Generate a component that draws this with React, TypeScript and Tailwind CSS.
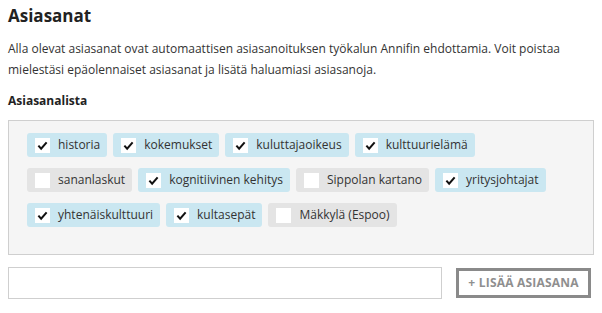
import React from "react";

const tags: { label: string; checked: boolean }[] = [
  { label: "historia", checked: true },
  { label: "kokemukset", checked: true },
  { label: "kuluttajaoikeus", checked: true },
  { label: "kulttuurielämä", checked: true },
  { label: "sananlaskut", checked: false },
  { label: "kognitiivinen kehitys", checked: true },
  { label: "Sippolan kartano", checked: false },
  { label: "yritysjohtajat", checked: true },
  { label: "yhtenäiskulttuuri", checked: true },
  { label: "kultasepät", checked: true },
  { label: "Mäkkylä (Espoo)", checked: false },
];

function Check() {
  return (
    <svg width="11" height="11" viewBox="0 0 12 12" fill="none">
      <path d="M1.5 6.2 L4.5 9.5 L10.5 2.5" stroke="#111" strokeWidth="2.2" />
    </svg>
  );
}

export default function App() {
  return (
    <div className="w-[602px] h-[313px] bg-white px-2 pt-[3px] text-[#333] font-['Open_Sans',sans-serif]">
      <h2 className="text-[17px] font-bold leading-[26px] text-[#222]">Asiasanat</h2>
      <p className="mt-[9px] text-[12px] leading-[21px]">
        Alla olevat asiasanat ovat automaattisen asiasanoituksen työkalun Annifin ehdottamia. Voit poistaa mielestäsi epäolennaiset asiasanat ja lisätä haluamiasi asiasanoja.
      </p>
      <div className="mt-[11px] text-[12px] font-bold leading-[20px] text-[#222]">Asiasanalista</div>
      <div className="mt-[9px] h-[135px] border border-[#cfcfcf] bg-[#f5f5f5] pl-[18px] pr-4 pt-[12px]">
        <div className="flex flex-wrap gap-x-[6px] gap-y-[11px]">
          {tags.map((t) => (
            <div
              key={t.label}
              className={
                "flex h-[24px] items-center gap-[8px] rounded-[3px] pl-[8px] pr-[7px] text-[12px] " +
                (t.checked ? "bg-[#cae7f1]" : "bg-[#e4e4e4]")
              }
            >
              <span className="flex h-[15px] w-[15px] items-center justify-center bg-white">
                {t.checked ? <Check /> : null}
              </span>
              <span>{t.label}</span>
            </div>
          ))}
        </div>
      </div>
      <div className="mt-[12px] flex items-center gap-[14px]">
        <div className="h-[32px] w-[434px] border border-[#cfcfcf] bg-white" />
        <button className="h-[30px] w-[135px] border-[3px] border-[#8a8a8a] bg-white text-[12px] font-bold tracking-[0.2px] text-[#8f8f8f]">
          + LISÄÄ ASIASANA
        </button>
      </div>
    </div>
  );
}
